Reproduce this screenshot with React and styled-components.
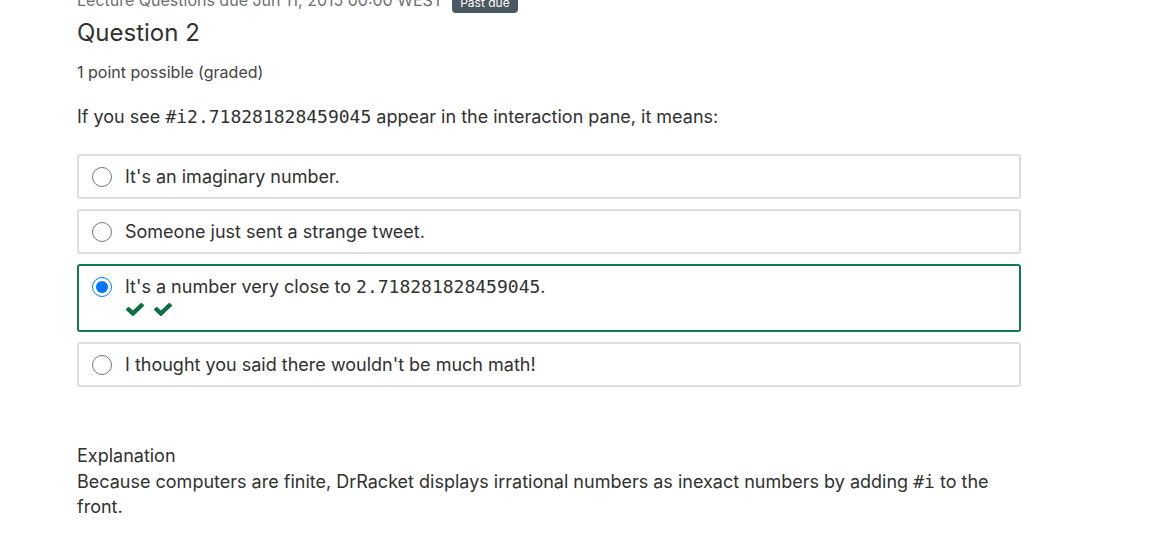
import React from "react";
import styled, { createGlobalStyle } from "styled-components";

const Global = createGlobalStyle`
  html, body { margin: 0; padding: 0; background: #fff; }
  body { font-family: Inter, "Noto Sans", sans-serif; color: #313131; overflow: hidden; }
`;

const Page = styled.div`
  width: 944px;
  padding-left: 77px;
  display: flex;
  flex-direction: column;
`;

const HeaderRow = styled.div`
  margin-top: -12px;
  display: flex;
  align-items: flex-start;
  gap: 9px;
`;

const DueText = styled.span`
  font-size: 16px;
  line-height: 24px;
  color: #6f6f6f;
`;

const Badge = styled.span`
  margin-top: 4px;
  height: 21px;
  padding: 0 8px;
  display: inline-flex;
  align-items: center;
  background: #4a5961;
  color: #fff;
  font-size: 12px;
  border-radius: 4px;
`;

const Title = styled.h2`
  margin: 4px 0 0;
  font-size: 24px;
  line-height: 32px;
  font-weight: 400;
  color: #313131;
`;

const Points = styled.div`
  margin-top: 13px;
  font-size: 16px;
  line-height: 20px;
  color: #454545;
`;

const Prompt = styled.p`
  margin: 23px 0 0;
  font-size: 18px;
  line-height: 24px;
`;

const Code = styled.code`
  font-family: "DejaVu Sans Mono", monospace;
  font-size: 18px;
`;

const Choices = styled.div`
  margin-top: 25px;
  display: flex;
  flex-direction: column;
  gap: 10px;
`;

const Choice = styled.label`
  display: flex;
  align-items: flex-start;
  gap: 13px;
  padding: 9px 13px 8px;
  border: 2px solid ${(p) => (p.$correct ? "#0d7d4d" : "#dedede")};
  border-radius: 3px;
  font-size: 18px;
  line-height: 24px;
`;

const Radio = styled.input`
  width: 20px;
  height: 20px;
  margin: 2px 0 0;
  flex: none;
`;

const ChoiceBody = styled.div`
  display: flex;
  flex-direction: column;
`;

const Checks = styled.div`
  height: 23px;
  padding-top: 4px;
  box-sizing: border-box;
  display: flex;
  align-items: flex-start;
  gap: 10px;
  color: #0b7045;
  margin-left: 1px;
`;

const CheckIcon = () => (
  <svg width="18" height="13" viewBox="121 334 1550 1188" preserveAspectRatio="none" fill="currentColor">
    <path d="M1671 566q0 40-28 68l-724 724-136 136q-28 28-68 28t-68-28l-136-136-362-362q-28-28-28-68t28-68l136-136q28-28 68-28t68 28l294 295 656-657q28-28 68-28t68 28l136 136q28 28 28 68z" />
  </svg>
);

const Explanation = styled.div`
  margin-top: 56px;
  font-size: 18px;
  line-height: 25.5px;
`;

const choices = [
  { text: "It's an imaginary number." },
  { text: "Someone just sent a strange tweet." },
  { text: "It's a number very close to ", code: "2.718281828459045", after: ".", correct: true },
  { text: "I thought you said there wouldn't be much math!" },
];

export default function App() {
  return (
    <>
      <Global />
      <Page>
        <HeaderRow>
          <DueText>Lecture Questions due Jun 11, 2015 00:00 WEST</DueText>
          <Badge>Past due</Badge>
        </HeaderRow>
        <Title>Question 2</Title>
        <Points>1 point possible (graded)</Points>
        <Prompt>
          If you see <Code>#i2.718281828459045</Code> appear in the interaction pane, it means:
        </Prompt>
        <Choices>
          {choices.map((c, i) => (
            <Choice key={i} $correct={c.correct}>
              <Radio type="radio" name="q2" checked={!!c.correct} readOnly />
              <ChoiceBody>
                <span>
                  {c.text}
                  {c.code && <Code>{c.code}</Code>}
                  {c.after}
                </span>
                {c.correct && (
                  <Checks>
                    <CheckIcon />
                    <CheckIcon />
                  </Checks>
                )}
              </ChoiceBody>
            </Choice>
          ))}
        </Choices>
        <Explanation>
          <div>Explanation</div>
          <div>
            Because computers are finite, DrRacket displays irrational numbers as inexact numbers by adding <Code>#i</Code> to the front.
          </div>
        </Explanation>
      </Page>
    </>
  );
}
